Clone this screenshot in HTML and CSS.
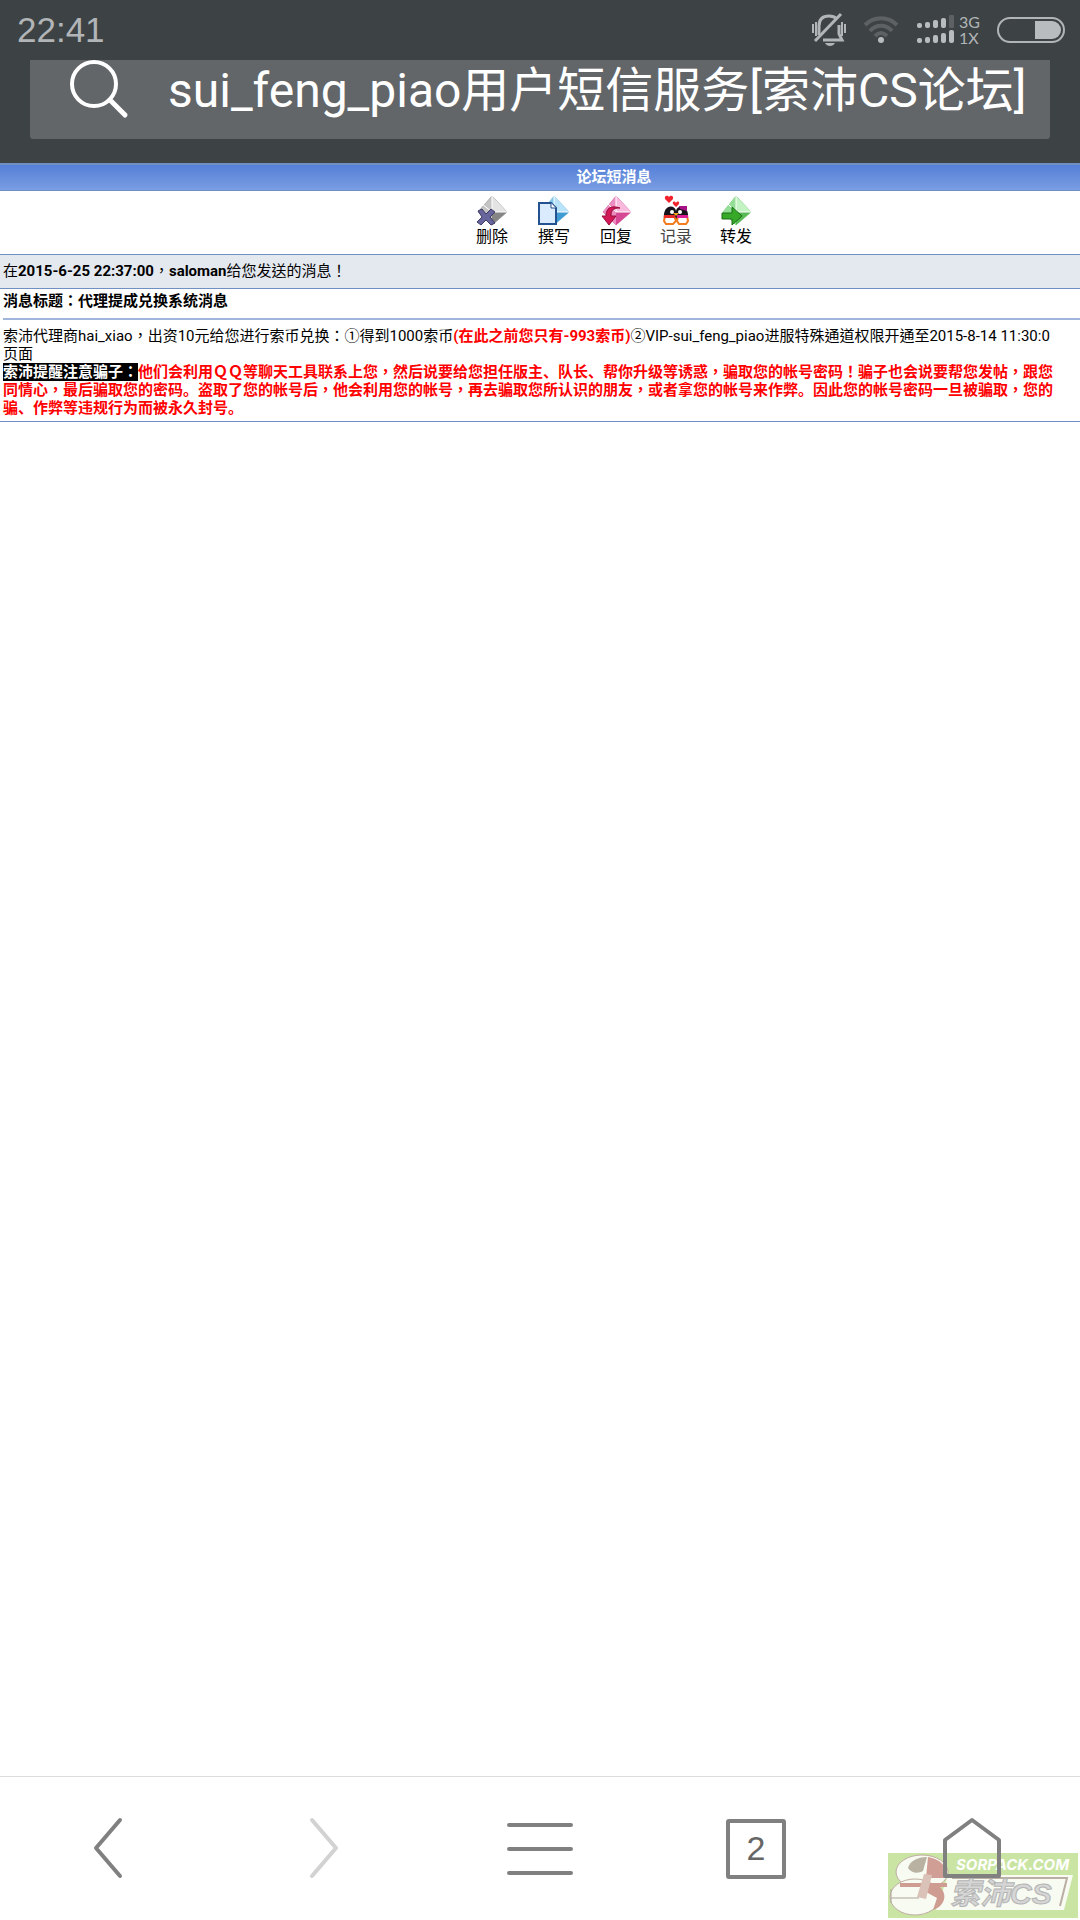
FILE: index.html
```html
<!DOCTYPE html>
<html lang="zh-CN">
<head>
<meta charset="utf-8">
<meta name="viewport" content="width=device-width, initial-scale=1">
<title>sui_feng_piao用户短信服务[索沛CS论坛]</title>
<link rel="stylesheet" href="styles.css">
</head>
<body>
<header class="chrome">
  <div class="status">
    <time class="clock">22:41</time>
    <div class="indicators">
      <svg class="bell" width="36" height="34" viewBox="0 0 36 34" fill="none" stroke="#b2b5b7">
        <path d="M8 22V13C8 6 12 3 18 3c4 0 6 1 8 3M28 12v9l3 6H12" stroke-width="3"/>
        <path d="M30 1L4 28" stroke-width="3"/>
        <path d="M2 11v9M5 9v14M31 9v14M34 11v9" stroke-width="2"/>
        <path d="M14 30h10c-2 4-8 4-10 0z" fill="#b2b5b7" stroke="none"/>
      </svg>
      <svg class="wifi" width="36" height="30" viewBox="0 0 36 30" fill="none" stroke="#5d6163" stroke-width="4">
        <path d="M2 10C11 1 25 1 34 10M7 16c6-7 16-7 22 0M12 21c4-4 8-4 12 0"/>
        <circle cx="18" cy="25" r="3" fill="#b9bcbe" stroke="none"/>
      </svg>
      <svg class="signal" width="38" height="30" viewBox="0 0 38 30" fill="#b9bcbe">
        <rect x="0" y="8" width="5" height="5" rx="2"/><rect x="8" y="7" width="5" height="6" rx="2"/><rect x="16" y="5" width="5" height="8" rx="2"/><rect x="24" y="3" width="5" height="10" rx="2"/><rect x="32" y="0" width="5" height="13" rx="1" fill="#5d6163"/>
        <rect x="0" y="23" width="5" height="5" rx="2"/><rect x="8" y="22" width="5" height="6" rx="2"/><rect x="16" y="20" width="5" height="8" rx="2"/><rect x="24" y="18" width="5" height="10" rx="2"/><rect x="32" y="15" width="5" height="13" rx="2"/>
      </svg>
      <div class="network"><span>3G</span><span>1X</span></div>
      <svg class="battery" width="68" height="26" viewBox="0 0 68 26">
        <rect x="1" y="1" width="66" height="24" rx="12" fill="none" stroke="#b2b5b7" stroke-width="2"/>
        <path d="M38 4h17a9 9 0 0 1 0 18H38z" fill="#b9bcbe"/>
      </svg>
    </div>
  </div>
  <label class="search">
    <svg width="60" height="60" viewBox="0 0 60 60" fill="none" stroke="#fff" stroke-width="4" stroke-linecap="round">
      <circle cx="25" cy="24" r="22"/><path d="M41 40l15 15" stroke-width="5"/>
    </svg>
    <input type="text" aria-label="搜索或输入网址" value="sui_feng_piao用户短信服务[索沛CS论坛]">
  </label>
</header>

<main class="viewport">
  <div class="forum">
    <h1 class="bar">论坛短消息</h1>
    <nav class="actions">
      <a href="#delete">
        <svg width="32" height="32" viewBox="0 0 32 32"><path d="M16 1l15 16-15 13L2 17z" fill="#c4c4c4" stroke="#aaa"/><path d="M16 1v16h15" fill="#e4e4e4"/><path d="M16 17h15L16 30z" fill="#858585"/><path d="M16 1v16h15M16 17L6 9" stroke="#fff" fill="none"/><path d="M2 16l4-2 4 5 5-5 4 3-5 5 5 6-4 2-5-5-5 5-4-3 5-5z" fill="#67659c" stroke="#3d3c65"/></svg>
        <span>删除</span></a>
      <a href="#compose">
        <svg width="32" height="32" viewBox="0 0 32 32"><path d="M16 1l15 16-15 13L3 17z" fill="#7fc6ee" stroke="#9ccbe6"/><path d="M16 1v16h15" fill="#b9e3fa"/><path d="M16 17h15L16 30z" fill="#3f9bd2"/><path d="M16 1v16h15" stroke="#fff" fill="none"/><path d="M1 8h12l5 5v16H1z" fill="#d9ebfc" stroke="#24518f" stroke-width="2"/><path d="M13 8v5h5" fill="#fff" stroke="#24518f"/></svg>
        <span>撰写</span></a>
      <a href="#reply">
        <svg width="32" height="32" viewBox="0 0 32 32"><path d="M16 1l15 16-15 13L3 17z" fill="#ed8cc0" stroke="#dc83b3"/><path d="M16 1v16h15" fill="#f9b9dc"/><path d="M16 17h15L16 30z" fill="#d64893"/><path d="M16 1v16h15M16 17L8 9" stroke="#fff" fill="none"/><path d="M20 13c-7 0-9 2-9 8h5l-7 9-7-9h4c0-8 5-11 14-8z" fill="#d31757" stroke="#96103c"/></svg>
        <span>回复</span></a>
      <a class="record" href="#log">
        <svg width="28" height="32" viewBox="0 0 28 32"><path d="M7 8L3 4c-1-4 3-4 4-2 1-2 5-2 4 2zM14 12l-3-3c-1-3 2-3 3-1 1-2 4-2 3 1z" fill="#f0232d"/><path d="M2 25C0 9 13 9 14 16c1-7 14-7 12 9z" fill="#17131b"/><path d="M17 11h8v5l-7-2z" fill="#a51288"/><path d="M3 21h9l2 5-3 3H4l-2-3zM16 21h9l1 5-2 3h-7l-2-3z" fill="#fff" stroke="#f27c1e" stroke-width="2"/><path d="M2 20h11v3H2z" fill="#e92c28"/><path d="M15 20h11v3H15z" fill="#db1c95"/><circle cx="10" cy="17" r="2" fill="#fff"/><circle cx="18" cy="17" r="2" fill="#fff"/><path d="M11 18h6l-3 3z" fill="#f8a51b"/></svg>
        <span>记录</span></a>
      <a href="#forward">
        <svg width="32" height="32" viewBox="0 0 32 32"><path d="M16 1l15 16-15 13L3 17z" fill="#92df95" stroke="#94d696"/><path d="M16 1v16h15" fill="#c3f3c3"/><path d="M16 17h15L16 30z" fill="#57b954"/><path d="M16 1v16h15M16 17L8 9" stroke="#fff" fill="none"/><path d="M2 18h10v-6l10 9-10 9v-6H2z" fill="#37a928" stroke="#1d6f17"/></svg>
        <span>转发</span></a>
    </nav>
    <p class="sender" lang="zh-TW">在<b>2015-6-25 22:37:00</b>，<b>saloman</b>给您发送的消息！</p>
    <article class="message" lang="zh-TW">
      <h2>消息标题：代理提成兑换系统消息</h2>
      <hr>
      <p>索沛代理商hai_xiao，出资10元给您进行索币兑换：①得到1000索币<b class="warn">(在此之前您只有-993索币)</b>②VIP-sui_feng_piao进服特殊通道权限开通至2015-8-14 11:30:0<br>
      页面<br>
      <b class="warn"><mark>索沛提醒注意骗子：</mark>他们会利用ＱＱ等聊天工具联系上您，然后说要给您担任版主<i lang="zh-CN">、</i>队长<i lang="zh-CN">、</i>帮你升级等诱惑，骗取您的帐号密码！骗子也会说要帮您发帖，跟您<br>
      同情心，最后骗取您的密码<i lang="zh-CN">。</i>盗取了您的帐号后，他会利用您的帐号，再去骗取您所认识的朋友，或者拿您的帐号来作弊<i lang="zh-CN">。</i>因此您的帐号密码一旦被骗取，您的<br>
      骗<i lang="zh-CN">、</i>作弊等违规行为而被永久封号<i lang="zh-CN">。</i></b></p>
    </article>
  </div>
</main>

<footer class="toolbar">
  <svg class="watermark" width="190" height="65" viewBox="0 0 190 65">
    <rect width="190" height="65" fill="#cae5a3"/>
    <g opacity=".85">
      <path d="M60 22h125l-9 35H48z" fill="#fff"/>
      <path d="M64 25h115l-7 28" fill="none" stroke="#b9a5a5" stroke-width="2"/>
      <ellipse cx="34" cy="19" rx="26" ry="17" fill="#fff" stroke="#bfa3a3"/>
      <ellipse cx="27" cy="44" rx="25" ry="18" fill="#fff" stroke="#bfa3a3"/>
      <path d="M20 15c2-7 9-11 19-11l-4 14c-5 3-12 2-15-3z" fill="#b7aaa3"/>
      <path d="M40 4c12 2 19 9 20 21H38z" fill="#d29292"/>
      <path d="M12 30h47v4H12zM40 34h12c9 9 3 20-7 23l4-12-11-6z" fill="#d09090"/>
      <path d="M36 21l8 1-6 24-9-2z" fill="#dfbcbc"/>
      <path d="M3 45h28M3 36v14" stroke="#a99" fill="none"/>
    </g>
    <text class="mark-url" x="68" y="17">SORPACK.COM</text>
    <text class="mark-name" x="62" y="51">索沛CS</text>
  </svg>
  <button type="button" aria-label="后退"><svg width="64" height="64" viewBox="0 0 64 64"><path d="M44 3L20 31l24 28"/></svg></button>
  <button type="button" aria-label="前进" disabled><svg width="64" height="64" viewBox="0 0 64 64"><path d="M20 3l24 28-24 28"/></svg></button>
  <button type="button" aria-label="菜单"><svg width="68" height="64" viewBox="0 0 68 64"><path d="M3 8h62M3 32h62M3 56h62"/></svg></button>
  <button type="button" aria-label="标签页"><span class="tabs">2</span></button>
  <button type="button" aria-label="主页"><svg width="64" height="64" viewBox="0 0 64 64"><path d="M5 59V23L32 3l27 20v36z"/></svg></button>
</footer>
</body>
</html>
```
FILE: styles.css
```css
* { box-sizing: border-box; }

body {
  margin: 0;
  min-height: 100vh;
  display: flex;
  flex-direction: column;
  background: #fff;
  color: #000;
  font-family: Roboto, "Noto Sans CJK TC", sans-serif;
  font-size: 15px;
  line-height: 18px;
}

h1, h2, p { margin: 0; font-size: 15px; }

/* Browser chrome */
.chrome {
  background: #3d4245;
  padding-bottom: 24px;
}

.status {
  height: 60px;
  padding: 0 15px 0 17px;
  display: flex;
  align-items: center;
  justify-content: space-between;
  color: #b2b5b7;
}

.clock {
  font-family: "Liberation Sans", Arial, sans-serif;
  font-size: 35px;
  line-height: 40px;
}

.indicators { display: flex; align-items: center; }
.wifi { margin-left: 16px; }
.signal { margin-left: 18px; }

.network {
  display: flex;
  flex-direction: column;
  width: 24px;
  margin: 0 14px 0 4px;
  font-family: Lato, sans-serif;
  font-size: 16px;
  line-height: 16px;
}

.search {
  display: flex;
  align-items: flex-start;
  gap: 39px;
  height: 79px;
  margin: 0 30px;
  padding-left: 39px;
  background: #626669;
  border-radius: 0 0 3px 3px;
}

.search svg { flex: none; }

.search input {
  flex: 1;
  min-width: 0;
  height: 62px;
  padding: 0;
  border: 0;
  outline: 0;
  background: none;
  color: #fff;
  font-family: Roboto, "Noto Sans CJK SC", sans-serif;
  font-size: 48px;
  line-height: 62px;
}

/* Forum page, laid out wider than the screen */
.viewport {
  flex: 1;
  overflow: hidden;
}

.forum { width: calc(100% + 148px); }

.bar {
  height: 28px;
  border-top: 2px solid #7090c4;
  border-bottom: 1px solid #7090c4;
  background: linear-gradient(#5580d8, #7a9de2);
  color: #fff;
  line-height: 25px;
  text-align: center;
}

.actions {
  display: flex;
  justify-content: center;
  gap: 30px;
  height: 64px;
  padding-top: 4px;
  border-bottom: 1px solid #7090c4;
}

.actions a {
  display: flex;
  flex-direction: column;
  align-items: center;
  width: 32px;
  color: #000;
  font-size: 16px;
  line-height: 20px;
  text-decoration: none;
}

.actions .record {
  width: 28px;
  color: #444;
}

.actions span { white-space: nowrap; }

.sender {
  padding: 7px 3px 8px;
  background: #e4e8ef;
  border-bottom: 1px solid #7090c4;
}

.message {
  padding: 2px 3px 4px;
  border-bottom: 1px solid #7090c4;
  white-space: nowrap;
}

.message h2 { line-height: 20px; }

.message hr {
  height: 2px;
  margin: 7px 0;
  border: 0;
  background: #a0b4dc;
}

.message i {
  font-style: normal;
}

.warn { color: #f00; }

/* Inline parts share the paragraph's baseline without growing its lines */
.message b,
.message i,
.message mark { line-height: 1; }

mark {
  background: #000;
  color: #fff;
}

/* Bottom navigation */
.toolbar {
  position: relative;
  display: grid;
  grid-template-columns: repeat(5, 1fr);
  height: 144px;
  border-top: 1px solid #dcdcdc;
}

.toolbar button {
  position: relative;
  display: flex;
  align-items: center;
  justify-content: center;
  padding: 0;
  border: 0;
  background: none;
  color: #808080;
}

.toolbar button:disabled { color: #d2d2d2; }

.toolbar button svg {
  fill: none;
  stroke: currentColor;
  stroke-width: 4;
  stroke-linecap: round;
  stroke-linejoin: round;
}

.tabs {
  display: flex;
  align-items: center;
  justify-content: center;
  width: 60px;
  height: 60px;
  border: 4px solid #808080;
  border-radius: 3px;
  color: #666;
  font-family: "Liberation Sans", Arial, sans-serif;
  font-size: 34px;
}

.watermark {
  position: absolute;
  right: 2px;
  bottom: 2px;
}

.mark-url {
  fill: #fff;
  font: italic bold 15px Inter, sans-serif;
}

.mark-name {
  fill: #d6d6d6;
  stroke: #b4b4b4;
  font: italic bold 30px "Liberation Sans", "Noto Sans CJK SC", sans-serif;
}
```
